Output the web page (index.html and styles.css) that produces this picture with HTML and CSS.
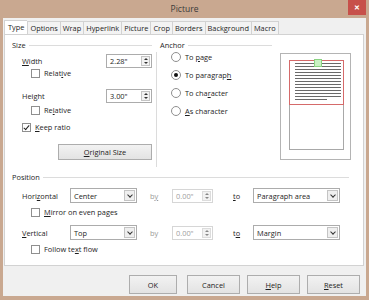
FILE: index.html
```html
<!DOCTYPE html>
<html lang="en">
<head>
  <meta charset="UTF-8" />
  <title>Picture</title>
  <link rel="stylesheet" href="styles.css">
</head>
<body>
  <div class="window">
    <div class="titlebar">
      <span class="title">Picture</span>
      <span class="close">&#x2715;</span>
    </div>

    <div class="client">
      <div class="tabs">
        <span class="tab active">Type</span>
        <span class="tab">Options</span>
        <span class="tab">Wrap</span>
        <span class="tab">Hyperlink</span>
        <span class="tab">Picture</span>
        <span class="tab">Crop</span>
        <span class="tab">Borders</span>
        <span class="tab">Background</span>
        <span class="tab">Macro</span>
      </div>

      <div class="panel">
        <div class="top">
          <section class="size">
            <div class="group-title"><span>Size</span></div>

            <div class="field-row r-width">
              <span class="label"><u>W</u>idth</span>
              <div class="spin"><span>2.28"</span><i class="spin-btn"></i></div>
            </div>
            <div class="check-row sub"><i class="check"></i><span>Relat<u>i</u>ve</span></div>

            <div class="field-row r-height">
              <span class="label">Hei<u>g</u>ht</span>
              <div class="spin"><span>3.00"</span><i class="spin-btn"></i></div>
            </div>
            <div class="check-row sub r-rel2"><i class="check"></i><span>Re<u>l</u>ative</span></div>

            <div class="check-row r-keep"><i class="check checked"></i><span><u>K</u>eep ratio</span></div>

            <button class="btn btn-orig"><u>O</u>riginal Size</button>
          </section>

          <div class="vsep"></div>

          <section class="anchor">
            <div class="group-title"><span>Anchor</span></div>
            <div class="radio-row first"><i class="radio"></i><span>To <u>p</u>age</span></div>
            <div class="radio-row"><i class="radio on"></i><span>To paragrap<u>h</u></span></div>
            <div class="radio-row"><i class="radio"></i><span>To cha<u>r</u>acter</span></div>
            <div class="radio-row"><i class="radio"></i><span><u>A</u>s character</span></div>
          </section>

          <div class="preview">
            <div class="page">
              <div class="frame">
                <div class="handle"></div>
                <div class="lines">
                  <i></i><i></i><i></i><i></i><i></i><i></i><i></i><i></i><i></i><i></i><i></i><i></i>
                  <i class="short"></i>
                </div>
              </div>
            </div>
          </div>
        </div>

        <section class="position">
          <div class="group-title wide"><span>Position</span></div>

          <div class="pos-row first">
            <span class="label">Hori<u>z</u>ontal</span>
            <div class="combo c-left"><span>Center</span><i class="drop"></i></div>
            <span class="by">b<u>y</u></span>
            <div class="spin disabled"><span>0.00"</span><i class="spin-btn"></i></div>
            <span class="to"><u>t</u>o</span>
            <div class="combo c-right"><span>Paragraph area</span><i class="drop"></i></div>
          </div>
          <div class="check-row sub"><i class="check"></i><span><u>M</u>irror on even pages</span></div>

          <div class="pos-row second">
            <span class="label"><u>V</u>ertical</span>
            <div class="combo c-left"><span>Top</span><i class="drop"></i></div>
            <span class="by">by</span>
            <div class="spin disabled"><span>0.00"</span><i class="spin-btn"></i></div>
            <span class="to">t<u>o</u></span>
            <div class="combo c-right"><span>Margin</span><i class="drop"></i></div>
          </div>
          <div class="check-row sub r-follow"><i class="check"></i><span>Follow te<u>x</u>t flow</span></div>
        </section>
      </div>

      <div class="buttons">
        <button class="btn btn-ok">OK</button>
        <button class="btn">Cancel</button>
        <button class="btn"><u>H</u>elp</button>
        <button class="btn"><u>R</u>eset</button>
      </div>
    </div>
  </div>
</body>
</html>
```

FILE: styles.css
```css
* {
  box-sizing: border-box;
}

body {
  margin: 0;
  font-family: 'Open Sans', 'Noto Sans', sans-serif;
  font-size: 7.4px;
  color: #1e1e1e;
  background-color: #c9a890;
}

u {
  text-decoration: underline;
  text-underline-offset: 1px;
}

.window {
  width: 369px;
  height: 300px;
  display: flex;
  flex-direction: column;
  background-color: #c9a890;
}

.titlebar {
  height: 18px;
  display: flex;
  align-items: flex-start;
  justify-content: center;
  position: relative;
}

.title {
  margin-top: 3px;
  font-size: 8.5px;
  color: #3a3a3a;
}

.close {
  position: absolute;
  right: 3px;
  top: 0;
  width: 18px;
  height: 15px;
  background-color: #c7504a;
  color: #fff;
  font-size: 7px;
  font-weight: bold;
  display: flex;
  align-items: center;
  justify-content: center;
}

.client {
  flex: 1;
  margin: 0 3px 4px 3px;
  background-color: #f0f0f0;
  display: flex;
  flex-direction: column;
}

/* tabs */
.tabs {
  display: flex;
  margin: 3px 0 0 1px;
  height: 13px;
  position: relative;
  z-index: 1;
}

.tab {
  height: 13px;
  padding: 0 2px;
  line-height: 12px;
  border: 1px solid #d2d2d2;
  border-right: none;
  border-bottom: none;
  background-color: #f3f3f3;
}

.tab:last-child {
  border-right: 1px solid #d2d2d2;
}

.tab.active {
  background-color: #fff;
  height: 14px;
  margin-top: -1px;
  line-height: 13px;
  padding: 0 3px;
}

.panel {
  height: 232px;
  margin: 0 2px 0 1px;
  background-color: #fff;
  border: 1px solid #d2d2d2;
  display: flex;
  flex-direction: column;
}

.top {
  display: flex;
  height: 132px;
}

/* group headings with line */
.group-title {
  height: 10px;
  margin-top: 5px;
  display: flex;
  align-items: center;
}

.group-title::after {
  content: "";
  flex: 1;
  height: 1px;
  margin-left: 3px;
  background-color: #dcdcdc;
}

.size {
  width: 147px;
  padding-left: 7px;
}

.field-row {
  display: flex;
  align-items: center;
  height: 14px;
  padding-left: 10px;
}

.field-row .label {
  width: 86px;
}

.r-width {
  margin-top: 4px;
}

.r-height {
  margin-top: 11px;
}

.check-row {
  height: 10px;
  display: flex;
  align-items: center;
  padding-left: 10px;
}

.check-row.sub {
  padding-left: 19px;
}

.r-rel2 {
  margin-top: 2px;
}

.r-keep {
  margin-top: 7px;
}

.check {
  width: 9px;
  height: 9px;
  border: 1px solid #8f8f8f;
  background-color: #fff;
  margin-right: 4px;
  position: relative;
}

.check.checked::after {
  content: "";
  position: absolute;
  left: 2px;
  top: 0;
  width: 2px;
  height: 5px;
  border: solid #222;
  border-width: 0 1.5px 1.5px 0;
  transform: rotate(40deg);
}

/* spin field */
.spin {
  width: 47px;
  height: 14px;
  border: 1px solid #acacac;
  background-color: #fff;
  display: flex;
  align-items: center;
  justify-content: space-between;
  padding: 0 1px 0 3px;
}

.spin-btn {
  width: 9px;
  height: 10px;
  border: 1px solid #c4c4c4;
  background-color: #f2f2f2;
  position: relative;
}

.spin-btn::before,
.spin-btn::after {
  content: "";
  position: absolute;
  left: 2px;
  border-left: 2px solid transparent;
  border-right: 2px solid transparent;
}

.spin-btn::before {
  top: 1px;
  border-bottom: 2px solid #333;
}

.spin-btn::after {
  bottom: 1px;
  border-top: 2px solid #333;
}

.spin.disabled {
  width: 41px;
  border-color: #d6d6d6;
  color: #a0a0a0;
}

.spin.disabled .spin-btn {
  border-color: #dcdcdc;
}

.spin.disabled .spin-btn::before {
  border-bottom-color: #888;
}

.spin.disabled .spin-btn::after {
  border-top-color: #888;
}

/* buttons */
.btn {
  font: inherit;
  color: #1e1e1e;
  height: 19px;
  border: 1px solid #adadad;
  background: linear-gradient(#f2f2f2, #e3e3e3);
  padding: 0;
}

.btn-orig {
  width: 94px;
  height: 16px;
  margin: 12px 0 0 46px;
  display: block;
}

.vsep {
  width: 1px;
  margin: 17px 3px 0 4px;
  background-color: #dcdcdc;
}

/* anchor */
.anchor {
  width: 112px;
}

.radio-row {
  height: 10px;
  margin-top: 8px;
  padding-left: 11px;
  display: flex;
  align-items: center;
}

.radio-row.first {
  margin-top: 2px;
}

.radio {
  width: 10px;
  height: 10px;
  border-radius: 50%;
  border: 1px solid #8f8f8f;
  background-color: #fff;
  margin-right: 4px;
  display: flex;
  align-items: center;
  justify-content: center;
}

.radio.on::after {
  content: "";
  width: 4px;
  height: 4px;
  border-radius: 50%;
  background-color: #111;
}

/* preview */
.preview {
  width: 71px;
  height: 107px;
  margin: 18px 0 0 8px;
  border: 1px solid #b4b4b4;
  padding: 6px 6px 0 8px;
}

.page {
  width: 55px;
  height: 90px;
  border: 1px solid #a8a8a8;
}

.frame {
  height: 45px;
  margin: -1px -1px 0 -1px;
  border: 1px solid #d56a6a;
  position: relative;
  padding: 2px 2px 0 5px;
}

.handle {
  position: absolute;
  left: 24px;
  top: -2px;
  width: 8px;
  height: 8px;
  background-color: #c9f2c4;
  border: 1px solid #8ad282;
}

.lines {
  display: flex;
  flex-direction: column;
  gap: 2px;
}

.lines i {
  display: block;
  height: 1px;
  background-color: #6a6a6a;
}

.lines i.short {
  width: 32px;
}

/* position */
.position {
  padding: 0 14px 0 7px;
}

.group-title.wide {
  margin-top: 5px;
}

.pos-row {
  display: flex;
  align-items: center;
  height: 15px;
  padding-left: 10px;
}

.pos-row.first {
  margin-top: 6px;
}

.pos-row.second {
  margin-top: 8px;
}

.pos-row + .check-row {
  margin-top: 4px;
}

.pos-row .label {
  width: 48px;
}

.combo {
  height: 15px;
  border: 1px solid #acacac;
  background-color: #fff;
  display: flex;
  align-items: center;
  justify-content: space-between;
  padding: 0 1px 0 3px;
}

.c-left {
  width: 67px;
}

.c-right {
  width: 87px;
}

.drop {
  width: 11px;
  height: 11px;
  border: 1px solid #c4c4c4;
  background-color: #efefef;
  position: relative;
}

.drop::after {
  content: "";
  position: absolute;
  left: 3px;
  top: 2px;
  width: 3px;
  height: 3px;
  border: solid #333;
  border-width: 0 1px 1px 0;
  transform: rotate(45deg);
}

.by {
  width: 22px;
  margin-left: 13px;
  color: #9a9a9a;
}

.to {
  width: 20px;
  margin-left: 20px;
}

.r-follow {
  margin-top: 6px;
}

.buttons {
  display: flex;
  justify-content: flex-end;
  gap: 7px;
  margin-top: 9px;
  padding-right: 6px;
}

.buttons .btn {
  width: 53px;
}

.buttons .btn-ok {
  width: 48px;
  margin-right: 3px;
}
```
